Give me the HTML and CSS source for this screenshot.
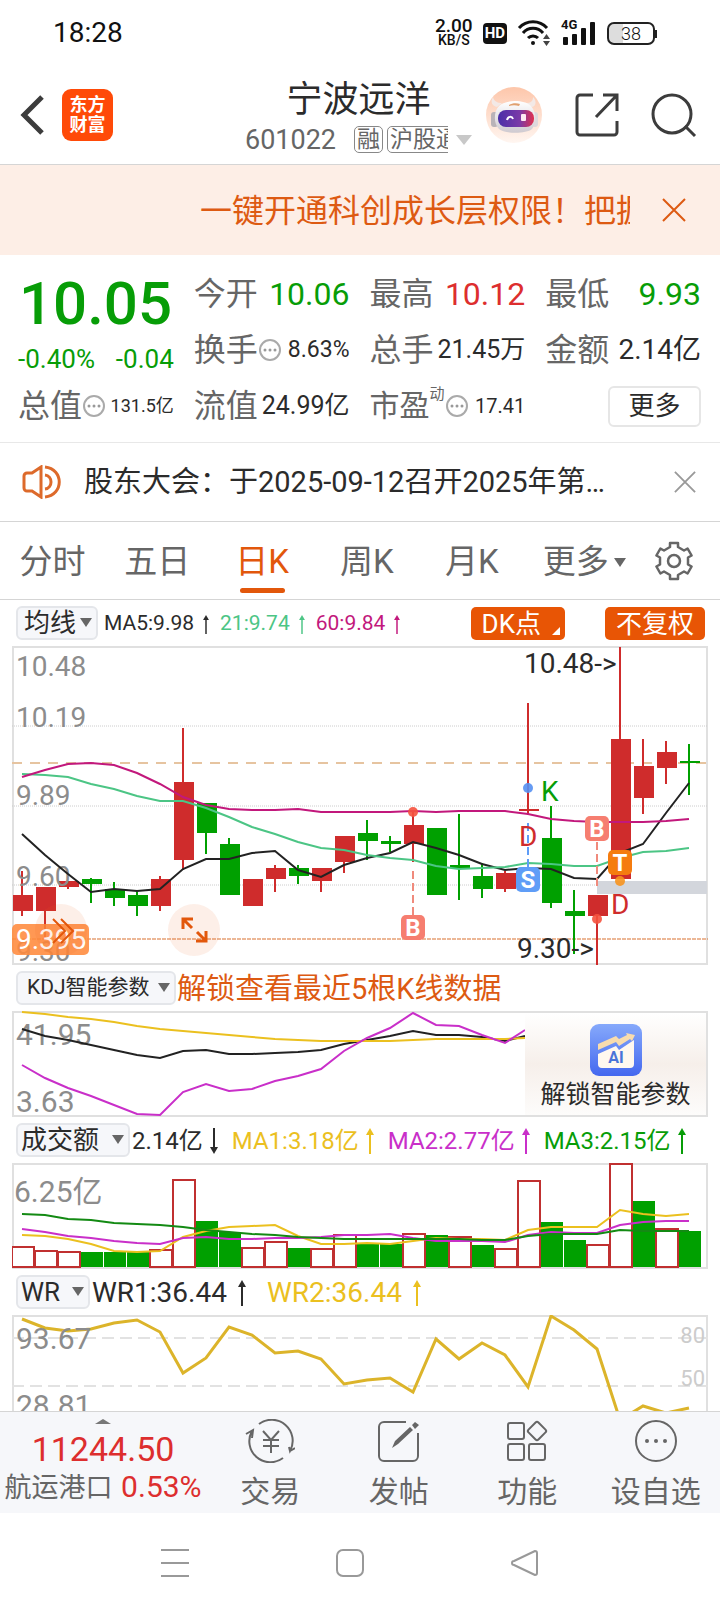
FILE: index.html
```html
<!DOCTYPE html>
<html lang="zh-CN">
  <head>
    <meta charset="UTF-8" />
    <meta name="viewport" content="width=device-width,initial-scale=1.0" />
    <title>宁波远洋 601022</title>
    <link rel="stylesheet" href="styles.css">
  </head>
  <body>
    <svg class="defs" aria-hidden="true">
      <symbol id="i-up" viewBox="0 0 10 26">
        <path d="M5 3v23" stroke="currentColor" stroke-width="2" />
        <path d="M5 0l4 7H1z" fill="currentColor" />
      </symbol>
      <symbol id="i-down" viewBox="0 0 10 26">
        <path d="M5 0v23" stroke="currentColor" stroke-width="2" />
        <path d="M5 26l4-7H1z" fill="currentColor" />
      </symbol>
      <symbol id="i-dots" viewBox="0 0 24 24">
        <circle cx="12" cy="12" r="10" fill="none" stroke="#aaa" stroke-width="2" />
        <circle cx="7" cy="12" r="1.5" fill="#999" />
        <circle cx="12" cy="12" r="1.5" fill="#999" />
        <circle cx="17" cy="12" r="1.5" fill="#999" />
      </symbol>
      <symbol id="i-close" viewBox="0 0 24 24">
        <path d="M1 1l22 22M23 1L1 23" stroke="currentColor" stroke-width="2" />
      </symbol>
    </svg>

    <div class="status">
      <span class="clock">18:28</span>
      <div class="status-icons">
        <span class="speed"><b>2.00</b><small>KB/S</small></span>
        <span class="hd">HD</span>
        <svg width="34" height="28" viewBox="0 0 34 28" fill="none" stroke="#111" stroke-width="3">
          <path d="M2 9a19 19 0 0 1 28 0" />
          <path d="M6 14a13 13 0 0 1 20 0" />
          <path d="M11 19a7 7 0 0 1 10 0" />
          <circle cx="16" cy="24" r="2" fill="#111" stroke="none" />
          <path d="M26 20l3.500-5 3.500 5zM26 22l3.500 5 3.500-5z" fill="#444" stroke="none" />
        </svg>
        <span class="signal">
          <em>4G</em>
          <svg width="36" height="24" viewBox="0 0 36 24" fill="#111">
            <rect x="2" y="16" width="5" height="8" rx="1" />
            <rect x="11" y="13" width="5" height="11" rx="1" />
            <rect x="20" y="7" width="5" height="17" rx="1" />
            <rect x="29" y="1" width="5" height="23" rx="1" />
          </svg>
        </span>
        <span class="battery">38</span>
      </div>
    </div>

    <header class="header">
      <div class="header-left">
        <button class="icon-btn" aria-label="返回">
          <svg width="24" height="40" viewBox="0 0 24 40" fill="none" stroke="#3c3c3c" stroke-width="5">
            <path d="M22 2L4 20l18 18" />
          </svg>
        </button>
        <a class="logo" href="#">东方<br>财富</a>
      </div>
      <div class="title">
        <h1>宁波远洋</h1>
        <button class="sub">
          <span class="code">601022</span>
          <span class="tags"><i>融</i><i>沪股通</i></span>
          <span class="tri light"></span>
        </button>
      </div>
      <div class="header-right">
        <button class="icon-btn" aria-label="智能助手">
          <svg width="58" height="58" viewBox="0 0 58 58">
            <defs>
              <linearGradient id="bot-bg" x1="0" y1="0" x2="0" y2="1">
                <stop offset="0" stop-color="#fdc6aa" />
                <stop offset="1" stop-color="#fff6f1" />
              </linearGradient>
              <linearGradient id="bot-face" x1="0" y1="0" x2="1" y2="0">
                <stop offset="0" stop-color="#4a2fa8" />
                <stop offset=".6" stop-color="#7a3aa8" />
                <stop offset="1" stop-color="#e0304e" />
              </linearGradient>
              <linearGradient id="bot-head" x1="0" y1="0" x2="0" y2="1">
                <stop offset="0" stop-color="#fff" />
                <stop offset="1" stop-color="#cfcad0" />
              </linearGradient>
            </defs>
            <circle cx="29" cy="29" r="28" fill="url(#bot-bg)" />
            <path d="M8 11c-3 5-1 9 4 10l5-4c-5 0-8-2-9-6zM48 11c4 4 3 9-1 10l-6-4c5 0 7-2 7-6z" fill="#f3e9e6" />
            <rect x="6" y="26" width="7" height="15" rx="3" fill="#b9b3b8" />
            <rect x="47" y="26" width="6" height="15" rx="3" fill="#ded8dc" />
            <path d="M14 20c5-6 25-7 32 0 5 5 6 17 1 23-6 5-27 5-33 0-6-6-5-18 0-23z" fill="url(#bot-head)" />
            <path d="M24 19c3-2 8-2 11-1l-1 2c-3-1-7-1-10 0z" fill="#e0a070" />
            <rect x="13" y="24" width="36" height="17" rx="8" fill="url(#bot-face)" />
            <path d="M22 34c1-4 5-4 6-1" fill="none" stroke="#fff" stroke-width="2" />
            <rect x="36" y="28" width="5" height="7" rx="1" fill="#ffeaf2" />
          </svg>
        </button>
        <button class="icon-btn" aria-label="分享">
          <svg width="44" height="44" viewBox="0 0 44 44" fill="none" stroke="#3c3c3c" stroke-width="3">
            <path d="M18 2H5a3 3 0 0 0-3 3v34a3 3 0 0 0 3 3h34a3 3 0 0 0 3-3V28M28 2h14v16M42 2L21 24" />
          </svg>
        </button>
        <button class="icon-btn" aria-label="搜索">
          <svg width="46" height="46" viewBox="0 0 46 46" fill="none" stroke="#3c3c3c" stroke-width="3">
            <circle cx="21" cy="22" r="19" />
            <path d="M34 34l10 10" />
          </svg>
        </button>
      </div>
    </header>

    <div class="banner">
      <a href="#">一键开通科创成长层权限！把握</a>
      <button class="icon-btn" aria-label="关闭">
        <svg width="24" height="24"><use href="#i-close" /></svg>
      </button>
    </div>

    <section class="quote">
      <div class="price down">
        <strong>10.05</strong>
        <div class="change"><span>-0.40%</span><span>-0.04</span></div>
      </div>
      <div class="cell"><span>今开</span><b class="s32 down">10.06</b></div>
      <div class="cell"><span>最高</span><b class="s32 up">10.12</b></div>
      <div class="cell"><span>最低</span><b class="s32 down">9.93</b></div>
      <div class="cell"><span>换手<svg class="dots"><use href="#i-dots" /></svg></span><b class="s23">8.63%</b></div>
      <div class="cell"><span>总手</span><b class="s25">21.45万</b></div>
      <div class="cell"><span>金额</span><b class="s28">2.14亿</b></div>
      <div class="cell"><span>总值<svg class="dots"><use href="#i-dots" /></svg></span><b class="s18">131.5亿</b></div>
      <div class="cell"><span>流值</span><b class="s25">24.99亿</b></div>
      <div class="cell pe"><span>市盈<sup>动</sup><svg class="dots"><use href="#i-dots" /></svg></span><b class="s20">17.41</b></div>
      <div class="cell end"><button class="more">更多</button></div>
    </section>

    <div class="notice">
      <svg width="40" height="34" viewBox="0 0 40 34" fill="none" stroke="#dd6a2b" stroke-width="3">
        <path d="M19 2v30l-9-6H5a3 3 0 0 1-3-3V11a3 3 0 0 1 3-3h5z" />
        <path d="M23 10c8 1 8 13 0 14M23 2c19 2 19 28 0 30" />
      </svg>
      <a href="#">股东大会：于2025-09-12召开2025年第…</a>
      <button class="icon-btn gray" aria-label="关闭">
        <svg width="22" height="22"><use href="#i-close" /></svg>
      </button>
    </div>

    <nav class="tabs">
      <a href="#">分时</a>
      <a href="#">五日</a>
      <a href="#" class="active">日K</a>
      <a href="#">周K</a>
      <a href="#">月K</a>
      <a href="#">更多<span class="tri small"></span></a>
      <button class="icon-btn" aria-label="设置">
        <svg width="40" height="40" viewBox="-20 -20 40 40" fill="none" stroke="#666" stroke-width="2.500" stroke-linejoin="round">
          <path d="M-4-18H4V-14L10-10.500 13.600-12.500 17.600-5.500 14-3.500V3.500L17.600 5.500 13.600 12.500 10 10.500 4 14V18H-4V14L-10 10.500-13.600 12.500-17.600 5.500-14 3.500V-3.500L-17.600-5.500-13.600-12.500-10-10.500-4-14z" />
          <circle r="6" />
        </svg>
      </button>
    </nav>

    <main class="charts">
      <div class="bar">
        <label class="chip"><select aria-label="主图指标"><option>均线</option></select></label>
        <div class="values s21">
          <span>MA5:9.98<svg class="arrow"><use href="#i-up" /></svg></span>
          <span class="mint">21:9.74<svg class="arrow"><use href="#i-up" /></svg></span>
          <span class="magenta">60:9.84<svg class="arrow"><use href="#i-up" /></svg></span>
        </div>
        <div class="actions">
          <button class="solid corner">DK点</button>
          <button class="solid">不复权</button>
        </div>
      </div>
      <svg id="kline" class="chart" viewBox="0 0 696 319"></svg>

      <div class="bar">
        <label class="chip s21"><select aria-label="副图指标"><option>KDJ智能参数</option></select></label>
        <a class="unlock" href="#">解锁查看最近5根K线数据</a>
      </div>
      <div class="chart-wrap">
        <svg id="kdj" class="chart" viewBox="0 0 696 106"></svg>
        <button class="ai">
          <svg width="52" height="52" viewBox="0 0 52 52">
            <defs>
              <linearGradient id="ai-bg" x1="0" y1="0" x2="0" y2="1">
                <stop offset="0" stop-color="#86a9fb" />
                <stop offset="1" stop-color="#4468ef" />
              </linearGradient>
            </defs>
            <rect width="52" height="52" rx="9" fill="url(#ai-bg)" />
            <path d="M8 30l18-8 3 4 15-10v24a4 4 0 0 1-4 4H12a4 4 0 0 1-4-4z" fill="#fff8ef" />
            <path d="M8 20l18-8 3 3 8-4-1-2 9 2-3 6-2-2-11 7-3-4-18 8z" fill="#f8dcae" />
            <text x="26" y="39" text-anchor="middle" class="ai-text">AI</text>
          </svg>
          <span>解锁智能参数</span>
        </button>
      </div>

      <div class="bar">
        <label class="chip wide"><select aria-label="成交指标"><option>成交额</option></select></label>
        <div class="values s24">
          <span>2.14亿<svg class="arrow"><use href="#i-down" /></svg></span>
          <span class="yellow">MA1:3.18亿<svg class="arrow"><use href="#i-up" /></svg></span>
          <span class="purple">MA2:2.77亿<svg class="arrow"><use href="#i-up" /></svg></span>
          <span class="down">MA3:2.15亿<svg class="arrow"><use href="#i-up" /></svg></span>
        </div>
      </div>
      <svg id="volume" class="chart" viewBox="0 0 696 106"></svg>

      <div class="bar">
        <label class="chip wr"><select aria-label="摆动指标"><option>WR</option></select></label>
        <div class="values s28">
          <span>WR1:36.44<svg class="arrow"><use href="#i-up" /></svg></span>
          <span class="yellow">WR2:36.44<svg class="arrow"><use href="#i-up" /></svg></span>
        </div>
      </div>
      <svg id="wr" class="chart" viewBox="0 0 696 96"></svg>
    </main>

    <nav class="bottom">
      <a href="#" class="index">
        <span class="caret"></span>
        <strong>11244.50</strong>
        <span class="sector">航运港口 <b>0.53%</b></span>
      </a>
      <a href="#">
        <svg width="50" height="44" viewBox="0 0 50 44" fill="none" stroke="#666" stroke-width="2">
          <path d="M14 5a21 21 0 0 1 31 27l-1-4M45 32l5-3M38 39A21 21 0 0 1 7 12M1 15l7-4-1 8" />
          <path d="M18 12l8 9 8-9M26 21v13M18 21h16M18 27h16" />
        </svg>
        <span>交易</span>
      </a>
      <a href="#">
        <svg width="44" height="44" viewBox="0 0 44 44" fill="none" stroke="#666" stroke-width="2">
          <path d="M29 3H7a5 5 0 0 0-5 5v29a5 5 0 0 0 5 5h29a5 5 0 0 0 5-5V14" />
          <path d="M15 29l3-7L33 8l3 3-15 14zM35 6l3-3 4 3-4 4z" fill="#666" stroke="none" />
        </svg>
        <span>发帖</span>
      </a>
      <a href="#">
        <svg width="44" height="44" viewBox="0 0 44 44" fill="none" stroke="#666" stroke-width="2">
          <rect x="3" y="4" width="16" height="16" rx="2" />
          <rect x="3" y="25" width="16" height="16" rx="2" />
          <rect x="24" y="25" width="16" height="16" rx="2" />
          <rect x="25" y="5" width="14" height="14" rx="2" transform="rotate(45 32 12)" />
        </svg>
        <span>功能</span>
      </a>
      <a href="#">
        <svg width="44" height="44" viewBox="0 0 44 44" fill="none" stroke="#666" stroke-width="2">
          <circle cx="22" cy="22" r="20" />
          <g fill="#666" stroke="none">
            <circle cx="13" cy="22" r="2" />
            <circle cx="22" cy="22" r="2" />
            <circle cx="31" cy="22" r="2" />
          </g>
        </svg>
        <span>设自选</span>
      </a>
    </nav>

    <div class="sysnav">
      <button class="icon-btn" aria-label="菜单">
        <svg width="28" height="28" viewBox="0 0 28 28" stroke="#999" stroke-width="2">
          <path d="M0 1h28M0 14h28M0 27h28" />
        </svg>
      </button>
      <button class="icon-btn" aria-label="主屏幕">
        <svg width="28" height="28" viewBox="0 0 28 28" fill="none" stroke="#999" stroke-width="2">
          <rect x="1" y="1" width="26" height="26" rx="6" />
        </svg>
      </button>
      <button class="icon-btn" aria-label="后退">
        <svg width="28" height="28" viewBox="0 0 28 28" fill="none" stroke="#999" stroke-width="2" stroke-linejoin="round">
          <path d="M24 2L3 12a2 2 0 0 0 0 4l21 10a2 2 0 0 0 2-2V4a2 2 0 0 0-2-2z" />
        </svg>
      </button>
    </div>
    <script src="charts.js"></script>
  </body>
</html>
```
FILE: styles.css
```css
* {
  box-sizing: border-box;
}
body {
  margin: 0;
  background: #fff;
  color: #2b2b2b;
  font-family: Roboto, "Noto Sans CJK SC", sans-serif;
  line-height: 1.2;
}
a {
  color: inherit;
  text-decoration: none;
}
button,
select {
  margin: 0;
  padding: 0;
  border: none;
  background: none;
  color: inherit;
  font: inherit;
  cursor: pointer;
}
svg {
  display: block;
  flex: none;
}
b {
  font-weight: 400;
}
.defs {
  display: none;
}
.icon-btn {
  display: flex;
  align-items: center;
  justify-content: center;
}
.up {
  color: #dd2e2e;
}
.down {
  color: #079d07;
}
.mint {
  color: #4cc585;
}
.magenta {
  color: #c2187c;
}
.yellow {
  color: #ebc01f;
}
.purple {
  color: #c92fc9;
}
.s18 { font-size: 18px; }
.s20 { font-size: 20px; }
.s21 { font-size: 21px; }
.s23 { font-size: 23px; }
.s24 { font-size: 24px; }
.s25 { font-size: 25px; }
.s28 { font-size: 28px; }
.s32 { font-size: 32px; }

/* down triangle */
.tri {
  display: inline-block;
  border: 8px solid transparent;
  border-top: 10px solid #c8c8c8;
  border-bottom: none;
}
.tri.small {
  border-width: 9px 6px 0;
  border-top-color: #666;
}

/* status bar */
.status {
  display: flex;
  align-items: center;
  justify-content: space-between;
  height: 66px;
  padding: 0 65px 0 53px;
  color: #111;
}
.clock {
  font-size: 28px;
}
.status-icons {
  display: flex;
  align-items: center;
  gap: 10px;
}
.speed {
  display: flex;
  flex-direction: column;
  align-items: center;
  line-height: 15px;
  font-weight: 500;
}
.speed b {
  font-size: 19px;
  font-weight: 500;
}
.speed small {
  font-size: 14px;
}
.hd {
  padding: 0 2px;
  border-radius: 4px;
  background: #111;
  color: #fff;
  font-size: 15px;
  font-weight: 700;
  line-height: 21px;
}
.signal {
  position: relative;
}
.signal em {
  position: absolute;
  top: -4px;
  left: 0;
  font-size: 13px;
  font-style: normal;
  font-weight: 700;
}
.battery {
  position: relative;
  width: 48px;
  border: 2px solid #222;
  border-radius: 7px;
  background: linear-gradient(90deg, #ddd 14px, #fff 14px);
  font-size: 18px;
  font-weight: 300;
  line-height: 19px;
  text-align: center;
}
.battery::after {
  content: "";
  position: absolute;
  top: 6px;
  right: -4px;
  width: 2px;
  height: 8px;
  background: #222;
}

/* header */
.header {
  display: grid;
  grid-template-columns: 1fr auto 1fr;
  align-items: center;
  height: 99px;
  padding: 0 23px 0 20px;
  border-bottom: 1px solid #d5d5d5;
}
.header-left {
  display: flex;
  align-items: center;
  gap: 18px;
}
.logo {
  width: 51px;
  padding: 6px 0;
  border-radius: 9px;
  background: #ff4a08;
  color: #fff;
  font-size: 18px;
  font-weight: 700;
  line-height: 20px;
  text-align: center;
}
.title {
  display: flex;
  flex-direction: column;
  align-items: center;
  padding-top: 3px;
}
.title h1 {
  margin: 0;
  font-size: 36px;
  font-weight: 400;
  line-height: 46px;
}
.sub {
  display: flex;
  align-items: center;
  color: #666;
  line-height: 34px;
}
.code {
  margin-right: 18px;
  font-size: 27px;
}
.tags {
  display: flex;
  gap: 4px;
  width: 94px;
  margin-right: 8px;
  overflow: hidden;
}
.tags i {
  flex: none;
  padding: 0 2px;
  border: 1px solid #888;
  border-radius: 5px;
  font-size: 23px;
  font-style: normal;
  line-height: 25px;
}
.header-right {
  display: flex;
  align-items: center;
  justify-content: flex-end;
  gap: 32px;
}

/* promo banner */
.banner {
  display: flex;
  align-items: center;
  justify-content: space-between;
  height: 90px;
  padding: 0 34px 0 200px;
  background: #fdeee6;
  color: #dd5a12;
}
.banner a {
  width: 430px;
  padding-top: 2px;
  overflow: hidden;
  font-size: 32px;
  white-space: nowrap;
}

/* quote block */
.quote {
  display: grid;
  grid-template-columns: repeat(4, 1fr);
  grid-auto-rows: 56px;
  column-gap: 20px;
  padding: 11px 19px 8px 18px;
  border-bottom: 1px solid #e8e8e8;
}
.price {
  grid-row: span 2;
  padding-top: 5px;
}
.price strong {
  display: block;
  padding-left: 1px;
  font-size: 60px;
  font-weight: 500;
  line-height: 66px;
}
.change {
  display: flex;
  justify-content: space-between;
  font-size: 26px;
  line-height: 44px;
}
.cell {
  display: flex;
  align-items: center;
  justify-content: space-between;
  white-space: nowrap;
}
.cell span {
  display: flex;
  align-items: center;
  color: #666;
  font-size: 32px;
}
.cell.pe span {
  font-size: 30px;
}
.cell.pe sup {
  align-self: flex-start;
  font-size: 15px;
  line-height: 12px;
}
.cell.end {
  justify-content: flex-end;
}
.dots {
  width: 24px;
  height: 24px;
}
.more {
  width: 93px;
  border: 2px solid #e6e6e6;
  border-radius: 6px;
  font-size: 26px;
  line-height: 37px;
}

/* notice */
.notice {
  display: flex;
  align-items: center;
  height: 79px;
  padding: 0 24px 0 22px;
  border-bottom: 1px solid #d5d5d5;
}
.notice a {
  flex: 1;
  margin-left: 22px;
  font-size: 29px;
}
.gray {
  color: #999;
}

/* period tabs */
.tabs {
  display: grid;
  grid-template-columns: repeat(5, 7fr) 8fr 4fr;
  height: 78px;
  padding-right: 16px;
  border-bottom: 1px solid #d5d5d5;
  color: #666;
  font-size: 33px;
}
.tabs a {
  display: flex;
  align-items: center;
  justify-content: center;
  gap: 5px;
  padding-top: 3px;
}
.tabs .active {
  position: relative;
  color: #e2570b;
}
.tabs .active::after {
  content: "";
  position: absolute;
  bottom: 6px;
  width: 45px;
  height: 5px;
  border-radius: 3px;
  background: #e2570b;
}

/* charts */
.charts {
  padding: 0 12px;
}
.bar {
  display: flex;
  align-items: center;
  height: 46px;
  padding: 0 3px 0 4px;
  white-space: nowrap;
}
.chip {
  position: relative;
  font-size: 26px;
}
.chip select {
  display: block;
  height: 34px;
  padding: 0 19px 0 6px;
  border: 2px solid #e4e6ea;
  border-radius: 6px;
  background: #f6f7fa;
  appearance: none;
}
.chip::after {
  content: "";
  position: absolute;
  top: 12px;
  right: 6px;
  border: 6px solid transparent;
  border-top: 9px solid #666;
  border-bottom: none;
  pointer-events: none;
}
.chip.s21 {
  font-size: 21px;
}
.chip.s21 select {
  padding: 0 24px 0 9px;
}
.chip.wide select {
  padding: 0 28px 0 3px;
}
.chip.wr select {
  padding: 0 27px 0 3px;
}
.values {
  display: flex;
  padding-top: 2px;
}
.values span {
  display: flex;
  align-items: center;
}
.arrow {
  width: 10px;
  height: 26px;
}
.values.s21 {
  gap: 9px;
  margin-left: 6px;
}
.s21 .arrow {
  height: 19px;
  margin-left: 7px;
}
.values.s24 {
  gap: 13px;
  margin-left: 2px;
}
.s24 .arrow {
  margin-left: 6px;
}
.values.s28 {
  gap: 20px;
  margin-left: 2px;
}
.s28 .arrow {
  margin-left: 10px;
}
.actions {
  display: flex;
  gap: 40px;
  margin-left: auto;
}
.solid {
  position: relative;
  height: 33px;
  padding: 0 11px;
  border-radius: 5px;
  background: #e85505;
  color: #fff;
  font-size: 26px;
  line-height: 34px;
}
.solid.corner {
  padding-right: 24px;
}
.solid.corner::after {
  content: "";
  position: absolute;
  right: 5px;
  bottom: 5px;
  border: 4px solid #fff;
  border-top-color: transparent;
  border-left-color: transparent;
}
.unlock {
  padding-top: 2px;
  margin-left: 1px;
  color: #dd5a12;
  font-size: 29px;
}
.chart {
  width: 100%;
  height: auto;
  overflow: hidden;
}
.chart text {
  font-size: 28px;
  fill: #2b2b2b;
}
.chart .axis {
  fill: #8c8c8c;
}
.chart .big {
  font-size: 30px;
}
.chart .level {
  font-size: 22px;
  fill: #ccc;
  text-anchor: end;
}
.chart .mark {
  font-size: 24px;
  font-weight: 700;
  fill: #fff;
  text-anchor: middle;
}
.chart .buy {
  fill: #cf2c2c;
}
.chart .sell {
  fill: #079d07;
}
.chart .tag {
  fill: #fff;
}
.chart-wrap {
  position: relative;
}
.ai {
  position: absolute;
  top: 2px;
  right: 2px;
  bottom: 2px;
  display: flex;
  flex-direction: column;
  align-items: center;
  justify-content: center;
  gap: 4px;
  width: 26%;
  padding-top: 6px;
  background: linear-gradient(#fff, #f6efea 50%, #fdfcfb);
  font-size: 25px;
}
.chart-wrap .ai-text {
  fill: #4b74d8;
  font-size: 16px;
  font-weight: 700;
}

/* bottom nav */
.bottom {
  display: grid;
  grid-template-columns: 206px repeat(4, 1fr);
  height: 102px;
  border-top: 1px solid #d5d5d5;
  background: #f6f7fa;
  color: #666;
  font-size: 30px;
}
.bottom a {
  display: flex;
  flex-direction: column;
  align-items: center;
  padding-top: 7px;
  gap: 11px;
  white-space: nowrap;
}
.bottom .index {
  gap: 0;
}
.caret {
  border: 8px solid transparent;
  border-top: none;
  border-bottom: 5px solid #777;
}
.index strong {
  margin-top: 5px;
  color: #dd2e2e;
  font-size: 34px;
  font-weight: 400;
}
.sector {
  font-size: 27px;
  line-height: 34px;
}
.sector b {
  margin-left: 2px;
  color: #dd2e2e;
  font-size: 30px;
}

/* system nav */
.sysnav {
  display: grid;
  grid-template-columns: repeat(3, 1fr);
  height: 99px;
  padding: 0 108px 0 87px;
}
```
FILE: charts.js
```js
const RED = "#cf2c2c";
const GREEN = "#00a000";
const STEP = 23;

const cx = (i) => 10 + i * STEP;
const line = (x1, y1, x2, y2, color, width = 2, dash = "") =>
  `<line x1="${x1}" y1="${y1}" x2="${x2}" y2="${y2}" stroke="${color}" stroke-width="${width}" stroke-dasharray="${dash}"/>`;
const rect = (x, y, w, h, fill, extra = "") =>
  `<rect x="${x}" y="${y}" width="${w}" height="${h}" fill="${fill}" ${extra}/>`;
const text = (x, y, cls, s) => `<text x="${x}" y="${y}" class="${cls}">${s}</text>`;
const dot = (x, y, color) => `<circle cx="${x}" cy="${y}" r="5" fill="${color}" opacity=".9"/>`;
const curve = (ys, color, width = 2, last = null) => {
  const pts = ys.map((y, i) => `${last && i === ys.length - 1 ? last : cx(i)},${y}`);
  return `<polyline points="${pts.join(" ")}" fill="none" stroke="${color}" stroke-width="${width}"/>`;
};
const frame = (h) => rect(1, 1, 694, h - 2, "none", 'stroke="#e0e0e0" stroke-width="2"');
const badge = (x, y, color, s, cls = "mark") =>
  rect(x, y, 24, 25, color, 'rx="5"') + text(x + 12, y + 21, cls, s);

// [color, body top, body bottom, high, low]
const candles = [
  ["r", 249, 265, 225, 270], ["r", 241, 265, 241, 292], ["r", 235, 241, 235, 243],
  ["g", 233, 238, 232, 257], ["g", 243, 252, 236, 260], ["g", 249, 260, 246, 270],
  ["r", 233, 260, 230, 265], ["r", 136, 214, 82, 224], ["g", 157, 187, 157, 208],
  ["g", 198, 249, 192, 249], ["r", 233, 260, 233, 260], ["r", 222, 233, 219, 246],
  ["g", 222, 230, 219, 238], ["r", 222, 235, 222, 246], ["r", 190, 216, 190, 227],
  ["g", 187, 195, 174, 214], ["g", 195, 198, 190, 206], ["r", 179, 198, 166, 216],
  ["g", 182, 249, 182, 249], ["g", 219, 222, 168, 254], ["g", 230, 243, 217, 252],
  ["r", 227, 243, 225, 246], ["r", 163, 165, 57, 169], ["g", 192, 257, 160, 262],
  ["g", 265, 270, 244, 308], ["r", 249, 270, 249, 319], ["r", 93, 233, 1, 233],
  ["r", 120, 152, 93, 168], ["r", 106, 122, 95, 138], ["g", 115, 117, 98, 149],
];

function drawKline() {
  let s = frame(319);
  [80, 160, 239].forEach((y) => (s += line(0, y, 696, y, "#ccc", 1, "1 1")));
  s += line(0, 117, 696, 117, "#e6c4a0", 2, "10 8");
  s += line(0, 293, 696, 293, "#d9702f", 1, "4 1");
  s += rect(585, 235, 110, 13, "#d3d6dc");
  candles.forEach(([c, top, bottom, high, low], i) => {
    const color = c === "r" ? RED : GREEN;
    s += rect(cx(i) - 9, top, 20, bottom - top, color);
    s += line(cx(i), high, cx(i), low, color);
  });
  s += text(4, 30, "axis", "10.48") + text(4, 81, "axis", "10.19");
  s += text(4, 159, "axis", "9.89") + text(4, 240, "axis", "9.60");
  s += curve([188, 209, 228, 246, 243, 245, 243, 223, 213, 213, 207, 205, 224, 231, 219, 212, 207, 196, 202, 209, 218, 224, 222, 223, 232, 233, 207, 198, 167, 137], "#222");
  s += curve([128, 129, 131, 138, 143, 150, 155, 155, 162, 171, 181, 188, 196, 202, 204, 209, 212, 214, 220, 223, 222, 221, 217, 218, 220, 220, 212, 206, 205, 202], "#4cc585");
  s += curve([131, 124, 118, 117, 119, 127, 138, 151, 159, 163, 164, 164, 163, 166, 166, 166, 166, 165, 166, 165, 165, 165, 168, 173, 175, 176, 176, 176, 175, 173], "#c2187c");

  // buy / sell marks
  s += line(516, 177, 516, 221, "#5f9df7", 2, "8 4") + badge(504, 221, "#5f9df7", "S");
  s += line(401, 225, 401, 269, "#f08a7c", 2, "8 4") + badge(389, 269, "#f67e70", "B");
  s += line(585, 196, 585, 240, "#f08a7c", 2, "8 4") + badge(573, 170, "#f67e70", "B");
  s += badge(596, 204, "#f57c0f", "T");
  s += dot(516, 142, "#5590f2") + dot(401, 166, "#f5523e") + dot(585, 273, "#f5523e") + dot(608, 235, "#f7941d");
  s += text(507, 200, "buy", "D") + text(529, 155, "sell", "K") + text(599, 268, "buy", "D");
  s += text(512, 27, "", "10.48-&gt;") + text(505, 312, "", "9.30-&gt;");

  // lowest axis label, price tag and chart buttons
  s += text(4, 315, "axis", "9.30");
  s += rect(0, 278, 77, 31, "#ff8a3c", 'rx="5" opacity=".88"') + text(4, 303, "tag", "9.395");
  s += '<circle cx="49" cy="284" r="26" fill="#e8601c" opacity=".1"/><circle cx="182" cy="284" r="26" fill="#e8601c" opacity=".1"/>';
  s += '<g fill="none" stroke="#e2570b" stroke-width="2"><path d="M41 273l12 12-12 12M49 273l12 12-12 12"/>';
  s += '<path stroke-width="3" d="M171 283v-10h10M172 274l8 8M194 285v10h-10M193 294l-8-8"/></g>';
  document.getElementById("kline").innerHTML = s;
}

function drawKdj() {
  let s = frame(106);
  s += text(4, 34, "axis big", "41.95") + text(4, 101, "axis big", "3.63");
  s += curve([18, 25, 29, 34, 39, 44, 47, 40, 39, 43, 43, 42, 41, 39, 33, 29, 25, 20, 24, 24, 26, 30, 25], "#222", 2, 513);
  s += curve([1, 3, 6, 8, 11, 15, 18, 20, 22, 24, 26, 28, 29, 30, 30, 30, 30, 29, 28, 28, 28, 28, 27], "#ebc01f", 2, 513);
  s += curve([54, 67, 77, 85, 94, 103, 104, 81, 73, 80, 78, 70, 65, 58, 40, 27, 17, 2, 14, 15, 24, 32, 19], "#c92fc9", 2, 513);
  document.getElementById("kdj").innerHTML = s;
}

const volumes = [
  ["r", 84], ["r", 88], ["r", 89], ["g", 89], ["g", 89], ["g", 89], ["r", 87], ["r", 17], ["g", 58], ["g", 69],
  ["r", 85], ["r", 79], ["g", 85], ["r", 86], ["r", 72], ["g", 80], ["g", 81], ["r", 71], ["g", 72], ["r", 74],
  ["g", 82], ["r", 86], ["r", 18], ["g", 59], ["g", 77], ["r", 82], ["r", 1], ["g", 38], ["r", 66], ["g", 68],
];

function drawVolume() {
  let s = frame(106);
  volumes.forEach(([c, top], i) => {
    const x = i * STEP;
    s += c === "r"
      ? rect(x, top, 22, 104 - top, "#fff", 'stroke="#c03030" stroke-width="2"')
      : rect(x, top, 22, 104 - top, GREEN);
  });
  s += text(2, 39, "axis big", "6.25亿");
  s += curve([72, 73, 76, 81, 88, 89, 88, 74, 68, 64, 63, 62, 73, 81, 81, 80, 81, 78, 75, 76, 76, 77, 67, 64, 64, 64, 47, 51, 53, 51], "#ebc01f");
  s += curve([66, 69, 73, 75, 78, 80, 81, 75, 74, 76, 76, 75, 75, 74, 72, 72, 71, 75, 78, 78, 78, 79, 72, 69, 70, 70, 62, 59, 58, 58], "#c92fc9");
  s += curve([51, 52, 56, 57, 60, 61, 62, 64, 67, 69, 71, 72, 74, 75, 76, 76, 76, 76, 76, 76, 77, 77, 73, 71, 71, 71, 67, 68, 68, 68], "#138a13");
  document.getElementById("volume").innerHTML = s;
}

function drawWr() {
  let s = frame(130);
  s += line(0, 23, 696, 23, "#e2e2e2", 2, "12 6") + line(0, 71, 696, 71, "#e2e2e2", 2, "12 6");
  s += curve([4, 13, 16, 14, 8, 5, 17, 58, 43, 12, 20, 38, 36, 44, 69, 65, 63, 77, 24, 44, 28, 40, 72, 1, 15, 34, 105, 91, 98, 93], "#dcb42a", 3);
  s += text(4, 34, "axis big", "93.67") + text(4, 101, "axis big", "28.81");
  s += text(693, 28, "level", "80") + text(693, 71, "level", "50");
  document.getElementById("wr").innerHTML = s;
}

drawKline();
drawKdj();
drawVolume();
drawWr();
```
